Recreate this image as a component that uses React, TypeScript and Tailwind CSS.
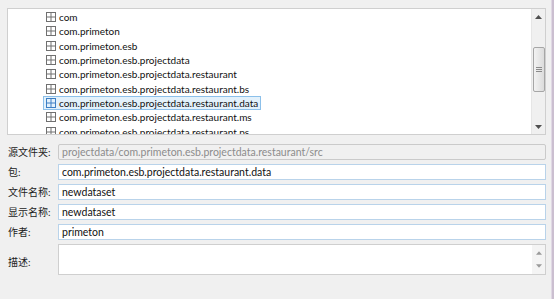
import React from "react";

const font = { fontFamily: 'Lato, "Noto Sans CJK SC", sans-serif' };

function PkgIcon({ selected }: { selected?: boolean }) {
  const c = selected ? "#3d7fc4" : "#707070";
  return (
    <svg width="10" height="10" viewBox="0 0 10 10" className="shrink-0">
      <rect x="0.5" y="0.5" width="9" height="9" fill="none" stroke={c} strokeWidth="1" />
      <line x1="5" y1="0.5" x2="5" y2="9.5" stroke={c} strokeWidth="1" />
      <line x1="0.5" y1="5" x2="9.5" y2="5" stroke={c} strokeWidth="1" />
    </svg>
  );
}

const pkgs = [
  "com",
  "com.primeton",
  "com.primeton.esb",
  "com.primeton.esb.projectdata",
  "com.primeton.esb.projectdata.restaurant",
  "com.primeton.esb.projectdata.restaurant.bs",
  "com.primeton.esb.projectdata.restaurant.data",
  "com.primeton.esb.projectdata.restaurant.ms",
  "com.primeton.esb.projectdata.restaurant.ps",
];

function Arrow({ up, small }: { up?: boolean; small?: boolean }) {
  return (
    <svg width={small ? 6 : 7} height="4" viewBox="0 0 7 4">
      {up ? <path d="M0 4 L3.5 0 L7 4 Z" fill={small ? "#9a9a9a" : "#505050"} /> : <path d="M0 0 L3.5 4 L7 0 Z" fill={small ? "#9a9a9a" : "#505050"} />}
    </svg>
  );
}

function Field({ label, value }: { label: string; value: string }) {
  return (
    <div className="flex items-center h-[16px]">
      <div className="w-[50px] text-[10px] text-[#222]">{label}</div>
      <div className="flex-1 h-[16px] border border-[#b9d3ea] bg-white flex items-center pl-[3px] text-[10.5px] text-[#111] leading-none">
        {value}
      </div>
    </div>
  );
}

export default function App() {
  return (
    <div className="w-[554px] h-[299px] bg-[#f0f0f0] flex overflow-hidden" style={font}>
      <div className="flex-1 flex flex-col pl-[7px] pr-[5px] pt-[8px]">
        <div className="h-[127px] border border-[#cfcfcf] bg-white flex overflow-hidden">
          <div className="flex-1 pt-[1px] pl-[36px] overflow-hidden">
            {pkgs.map((p, i) => {
              const sel = i === 6;
              return (
                <div key={p} className="h-[14.3px] flex items-center">
                  <div
                    className={
                      "flex items-center gap-[3px] h-[14px] pl-[2px] pr-[2px] " +
                      (sel ? "bg-[#e3f1fb] border border-[#8cc0ea] -ml-[1px]" : "border border-transparent -ml-[1px]")
                    }
                  >
                    <PkgIcon selected={sel} />
                    <span className="text-[10px] text-[#111] leading-none whitespace-nowrap">{p}</span>
                  </div>
                </div>
              );
            })}
          </div>
          <div className="w-[14px] bg-[#f0f0f0] border-l border-[#e6e6e6] flex flex-col items-center">
            <div className="h-[15px] flex items-center justify-center"><Arrow up /></div>
            <div className="h-[23px]" />
            <div className="w-[12px] h-[45px] border border-[#a6a6a6] rounded-[2px] bg-gradient-to-r from-[#f2f2f2] to-[#dcdcdc] flex flex-col items-center justify-center gap-[1px]">
              <div className="w-[6px] h-[1px] bg-[#8a8a8a]" />
              <div className="w-[6px] h-[1px] bg-[#8a8a8a]" />
              <div className="w-[6px] h-[1px] bg-[#8a8a8a]" />
            </div>
            <div className="flex-1" />
            <div className="h-[15px] flex items-center justify-center"><Arrow /></div>
          </div>
        </div>
        <div className="flex flex-col gap-[4px] pt-[9px] pl-[1px]">
          <div className="flex items-center h-[16px]">
            <div className="w-[50px] text-[10px] text-[#222]">源文件夹:</div>
            <div className="flex-1 h-[16px] border border-[#cacaca] rounded-[2px] bg-[#f0f0f0] flex items-center pl-[3px] text-[10.5px] text-[#8c8c8c] leading-none">
              projectdata/com.primeton.esb.projectdata.restaurant/src
            </div>
          </div>
          <Field label="包:" value="com.primeton.esb.projectdata.restaurant.data" />
          <Field label="文件名称:" value="newdataset" />
          <Field label="显示名称:" value="newdataset" />
          <Field label="作者:" value="primeton" />
          <div className="flex h-[31px]">
            <div className="w-[50px] text-[10px] text-[#222] pt-[11px]">描述:</div>
            <div className="flex-1 border border-[#cfcfcf] bg-white flex">
              <div className="flex-1" />
              <div className="w-[13px] bg-[#f4f4f4] flex flex-col items-center justify-around py-[2px]">
                <Arrow up small />
                <Arrow small />
              </div>
            </div>
          </div>
        </div>
      </div>
      <div className="w-[3px] bg-[#cbbfd0] border-l border-[#e0d8e4]" />
    </div>
  );
}
